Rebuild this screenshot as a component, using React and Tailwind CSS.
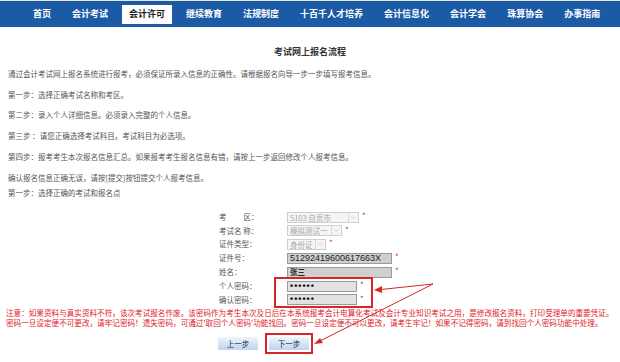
import React from 'react';
import { ChevronDown } from 'lucide-react';

const navItems = ['首页', '会计考试', '会计许可', '继续教育', '法规制度', '十百千人才培养', '会计信息化', '会计学会', '珠算协会', '办事指南'];

const steps = [
  { text: '通过会计考试网上报名系统进行报考，必须保证所录入信息的正确性。请根据报名向导一步一步填写报考信息。', mt: 'mt-[12px]' },
  { text: '第一步：选择正确考试名称和考区。', mt: 'mt-[11px]' },
  { text: '第二步：录入个人详细信息。必须录入完整的个人信息。', mt: 'mt-[10px]' },
  { text: '第三步 ：请您正确选择考试科目。考试科目为必选项。', mt: 'mt-[11px]' },
  { text: '第四步：报考考生本次报名信息汇总。如果报考考生报名信息有错，请按上一步返回修改个人报考信息。', mt: 'mt-[11px]' },
  { text: '确认报名信息正确无误，请按[提交]按钮提交个人报考信息。', mt: 'mt-[11px]' },
  { text: '第一步：选择正确的考试和报名点', mt: 'mt-[5px]' },
];

const Star = () => <span className="ml-[3px] -mt-[2px] text-[8px] leading-none text-[#e0262a]">*</span>;

const FakeSelect = ({ value, width }) => (
  <div className={`flex h-[11px] items-stretch border border-[#cfcfcf] bg-[#f5f5f5] ${width}`}>
    <span className="flex-1 overflow-hidden whitespace-nowrap pl-[2px] text-[7.5px] leading-[9px] text-[#a8a8a8]">{value}</span>
    <span className="flex w-[10px] shrink-0 items-center justify-center border-l border-[#d8d8d8] text-[#b5b5b5]">
      <ChevronDown size={7} strokeWidth={2} />
    </span>
  </div>
);

const Row = ({ label, h, children }) => (
  <div className={`flex items-center ${h}`}>
    <div className="w-[68px] text-[7.5px] text-[#555]">{label}</div>
    <div className="flex items-center">{children}</div>
  </div>
);

const App = () => {
  return (
    <div className="relative h-[362px] w-[620px] overflow-hidden bg-white font-['Noto_Sans_CJK_SC',sans-serif]">
      <div className="h-[1px] bg-[#e8e8e8]" />
      <div className="flex h-[26px] items-center gap-[21px] bg-[#1b5ba6] pl-[33px]">
        {navItems.map((item, i) =>
          i === 2 ? (
            <span key={i} className="-mx-[7px] flex h-[19px] items-center bg-white px-[7px] text-[9px] font-bold text-[#222]">{item}</span>
          ) : (
            <span key={i} className="text-[9px] font-bold text-white">{item}</span>
          )
        )}
      </div>

      <div className="mt-[20px] text-center text-[9px] font-bold leading-[10px] text-[#333]">考试网上报名流程</div>

      <div className="pl-[8px]">
        {steps.map((s, i) => (
          <div key={i} className={`${s.mt} text-[7.5px] leading-[10px] text-[#555]`}>{s.text}</div>
        ))}
      </div>

      <div className="mt-[12px] ml-[219px] flex flex-col">
        <Row label={<span>考<span className="inline-block w-[17px]" />区：</span>} h="h-[14px]">
          <FakeSelect value="5103 自贡市" width="w-[72px]" />
          <Star />
        </Row>
        <Row label="考试名 称：" h="h-[13px]">
          <FakeSelect value="模拟测试一" width="w-[55px]" />
          <Star />
        </Row>
        <Row label="证件类型：" h="h-[14px]">
          <FakeSelect value="身份证" width="w-[39px]" />
          <Star />
        </Row>
        <Row label="证件号：" h="h-[14px]">
          <div className="flex h-[11px] w-[105px] items-center border border-[#9a9a9a] bg-[#cfcfcf] pl-[2px] font-['Liberation_Sans',sans-serif] text-[9px] leading-none text-[#222]">51292419600617663X</div>
          <Star />
        </Row>
        <Row label="姓名：" h="h-[14px]">
          <div className="flex h-[11px] w-[105px] items-center border border-[#9a9a9a] bg-[#cfcfcf] pl-[2px] text-[7.5px] font-bold leading-none text-[#222]">张三</div>
          <Star />
        </Row>
        <div className="relative">
          <Row label="个人密码：" h="h-[14px]">
            <div className="flex h-[11px] w-[70px] items-center border border-[#9a9a9a] bg-[#e2e2e2] pl-[2px] font-['Liberation_Sans',sans-serif] text-[9px] font-bold leading-none tracking-[1px] text-[#111]">••••••</div>
            <Star />
          </Row>
          <Row label="确认密码：" h="h-[13px]">
            <div className="flex h-[11px] w-[70px] items-center border border-[#9a9a9a] bg-[#e2e2e2] pl-[2px] font-['Liberation_Sans',sans-serif] text-[9px] font-bold leading-none tracking-[1px] text-[#111]">••••••</div>
            <Star />
          </Row>
          <div className="pointer-events-none absolute left-[55px] top-[-2px] h-[31px] w-[99px] border-2 border-[#d7262a]" />
        </div>
      </div>

      <div className="mt-[2px] pl-[6px] text-[7.6px] leading-[10px] text-[#e0202a]">
        <div>注意：如果资料与真实资料不符，该次考试报名作废。该密码作为考生本次及日后在本系统报考会计电算化考试及会计专业知识考试之用，是修改报名资料，打印受理单的重要凭证。</div>
        <div>密码一旦设定便不可更改，请牢记密码！遗失密码，可通过'取回个人密码'功能找回。密码一旦设定便不可以更改，请考生牢记！如果不记得密码，请到找回个人密码功能中处理。</div>
      </div>

      <div className="mt-[5px] ml-[218px] flex items-center gap-[7px]">
        <button className="flex h-[13px] w-[40px] items-center justify-center rounded-[1px] bg-gradient-to-b from-[#eef5fc] to-[#bcd5ee] text-[7.5px] text-[#1a2a44]">上一步</button>
        <div className="border-2 border-[#d7262a] p-[2px]">
          <button className="flex h-[13px] w-[40px] items-center justify-center rounded-[1px] bg-gradient-to-b from-[#eef5fc] to-[#bcd5ee] text-[7.5px] text-[#1a2a44]">下一步</button>
        </div>
      </div>

      <svg className="pointer-events-none absolute left-0 top-0" width="620" height="362" viewBox="0 0 620 362">
        <line x1="433" y1="284" x2="376" y2="290" stroke="#d7262a" strokeWidth="1" />
        <polygon points="374,290 382,286 382,293" fill="#d7262a" />
        <line x1="433" y1="284" x2="316" y2="343" stroke="#d7262a" strokeWidth="1" />
        <polygon points="314,344 320,338 323,343" fill="#d7262a" />
      </svg>
    </div>
  );
};

export default App;
